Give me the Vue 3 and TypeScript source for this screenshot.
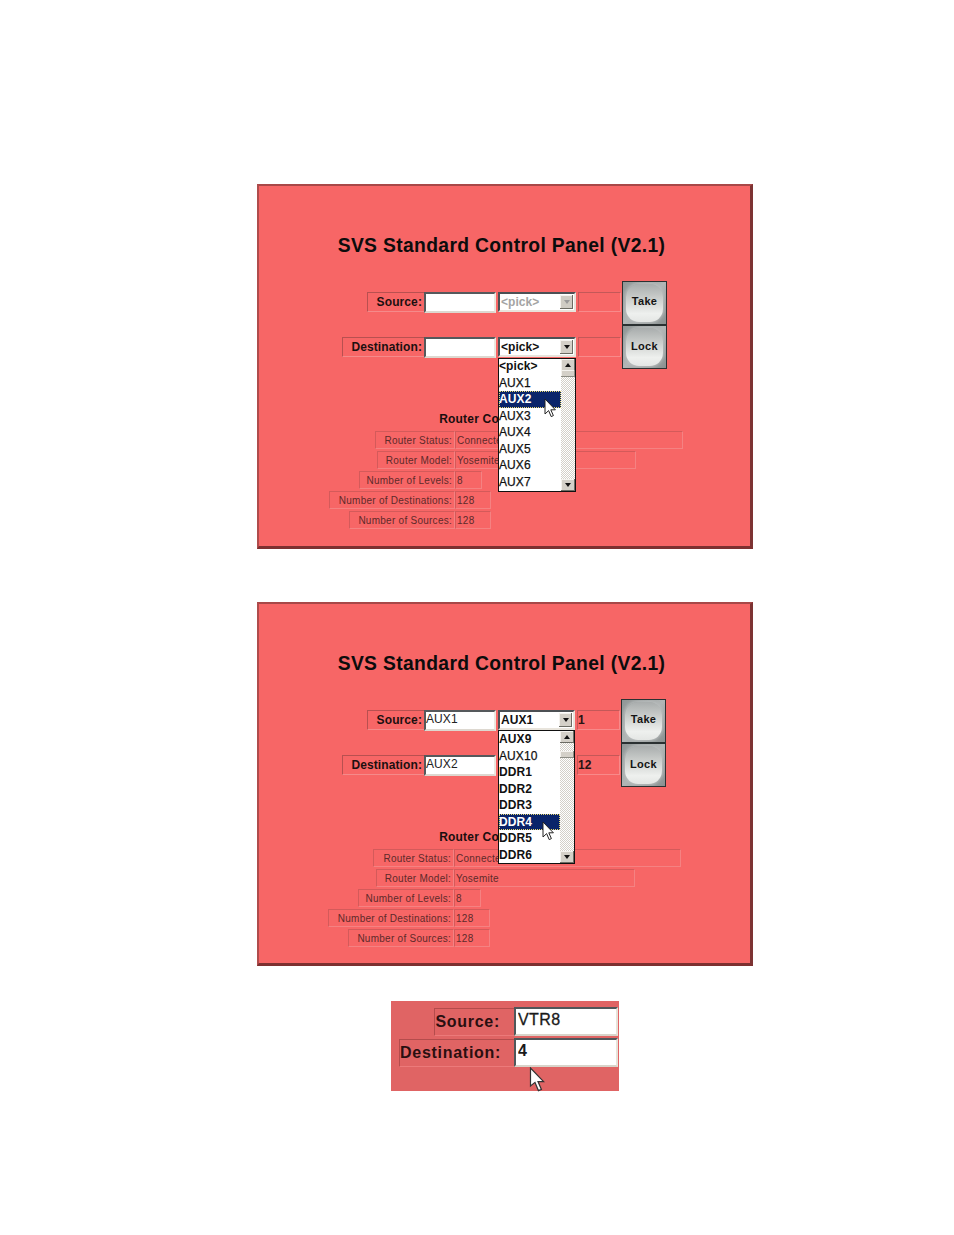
<script setup lang="ts">
interface Info { label: string; value: string; lw: number; vw: number }
interface Item { text: string; selected?: boolean; bold?: boolean }
interface Panel {
  id: string
  cls: string
  src: string
  dst: string
  srcSel: string
  dstSel: string
  srcDisabled: boolean
  srcNum: string
  dstNum: string
  thumb: number
  dropClass: string
  items: Item[]
  infos: Info[]
}

const panels: Panel[] = [
  {
    id: 'a', cls: 'p1', src: '', dst: '', srcSel: '<pick>', dstSel: '<pick>', srcDisabled: true,
    srcNum: '', dstNum: '', thumb: 11, dropClass: 'drop-low',
    items: [
      { text: '<pick>', bold: true }, { text: 'AUX1' }, { text: 'AUX2', selected: true }, { text: 'AUX3' },
      { text: 'AUX4' }, { text: 'AUX5' }, { text: 'AUX6' }, { text: 'AUX7' }
    ],
    infos: [
      { label: 'Router Status:', value: 'Connected', lw: 80, vw: 228 },
      { label: 'Router Model:', value: 'Yosemite', lw: 78, vw: 181 },
      { label: 'Number of Levels:', value: '8', lw: 96, vw: 27 },
      { label: 'Number of Destinations:', value: '128', lw: 126, vw: 36 },
      { label: 'Number of Sources:', value: '128', lw: 106, vw: 36 }
    ]
  },
  {
    id: 'b', cls: 'p2', src: 'AUX1', dst: 'AUX2', srcSel: 'AUX1', dstSel: 'AUX1', srcDisabled: false,
    srcNum: '1', dstNum: '12', thumb: 20, dropClass: 'drop-high',
    items: [
      { text: 'AUX9', bold: true }, { text: 'AUX10' }, { text: 'DDR1', bold: true }, { text: 'DDR2', bold: true },
      { text: 'DDR3', bold: true }, { text: 'DDR4', selected: true }, { text: 'DDR5', bold: true }, { text: 'DDR6', bold: true }
    ],
    infos: [
      { label: 'Router Status:', value: 'Connected', lw: 81, vw: 227 },
      { label: 'Router Model:', value: 'Yosemite', lw: 78, vw: 181 },
      { label: 'Number of Levels:', value: '8', lw: 96, vw: 27 },
      { label: 'Number of Destinations:', value: '128', lw: 126, vw: 36 },
      { label: 'Number of Sources:', value: '128', lw: 106, vw: 36 }
    ]
  }
]
</script>

<template>
  <div class="page">
    <section v-for="p in panels" :key="p.id" class="panel" :class="p.cls">
      <h1 class="title">SVS Standard Control Panel (V2.1)</h1>

      <div class="controls">
        <div class="ctl-row">
          <div class="label-cell"><span class="lbl lbl-src">Source:</span></div>
          <input class="text" readonly :value="p.src" aria-label="Source" />
          <div class="select" :class="{ disabled: p.srcDisabled }">
            <span class="sel-text">{{ p.srcSel }}</span>
            <span class="sel-btn"><i class="tri-down"></i></span>
          </div>
          <div class="num">{{ p.srcNum }}</div>
          <button class="gel" type="button"><span>Take</span></button>
        </div>
        <div class="ctl-row">
          <div class="label-cell"><span class="lbl lbl-dst">Destination:</span></div>
          <input class="text" readonly :value="p.dst" aria-label="Destination" />
          <div class="select">
            <span class="sel-text">{{ p.dstSel }}</span>
            <span class="sel-btn"><i class="tri-down"></i></span>
          </div>
          <div class="num">{{ p.dstNum }}</div>
          <button class="gel" type="button"><span>Lock</span></button>
        </div>
      </div>

      <h2 class="subtitle">Router Configuration</h2>

      <div class="infos">
        <div v-for="r in p.infos" :key="r.label" class="info-row">
          <div class="info-left">
            <span class="info-label" :style="{ width: r.lw + 'px' }">{{ r.label }}</span>
          </div>
          <span class="info-value" :style="{ width: r.vw + 'px' }">{{ r.value }}</span>
        </div>
      </div>

      <div class="drop" :class="p.dropClass">
        <ul class="list">
          <li v-for="it in p.items" :key="it.text" :class="{ sel: it.selected, bold: it.bold }">{{ it.text }}</li>
        </ul>
        <div class="sb">
          <span class="sb-btn"><i class="tri-up"></i></span>
          <span class="sb-thumb" :style="{ top: p.thumb + 'px' }"></span>
          <span class="sb-btn sb-down"><i class="tri-down"></i></span>
        </div>
      </div>

      <svg class="cursor" width="12" height="20" viewBox="0 0 12 20">
        <path d="M1 1V16L4.6 12.6L7.2 18.6L9.4 17.6L6.8 11.8H11.4Z" fill="#fff" stroke="#222" stroke-width="1" />
      </svg>
    </section>

    <section class="crop">
      <div class="crop-row">
        <span class="crop-lbl crop-src">Source:</span>
        <input class="crop-input" readonly value="VTR8" aria-label="Source" />
      </div>
      <div class="crop-row">
        <span class="crop-lbl crop-dst">Destination:</span>
        <input class="crop-input strong" readonly value="4" aria-label="Destination" />
      </div>
      <svg class="crop-cursor" width="16" height="25" viewBox="0 0 16 25">
        <path d="M1.5 1V19L6 15.4L9.4 23.6L12.4 22.4L9 14.6H14.6Z" fill="#fff" stroke="#333" stroke-width="1.2" />
      </svg>
    </section>
  </div>
</template>

<style>
html, body { margin: 0; background: #fff; }
</style>

<style scoped>
.page {
  height: 1235px;
  padding-top: 184px;
  box-sizing: border-box;
  overflow: hidden;
  background: #fff;
  font-family: "Liberation Sans", Arial, sans-serif;
  color: #111;
}
.panel {
  position: relative;
  box-sizing: border-box;
  width: 496px;
  height: 365px;
  margin-left: 257px;
  padding-top: 48px;
  background: #f76666;
  border-top: 2px solid #a84848;
  border-left: 2px solid #b04c4c;
  border-right: 3px solid #7d3333;
  border-bottom: 3px solid #7d3030;
}
.p2 { height: 364px; margin-top: 53px; }

.title {
  margin: 0;
  padding-right: 6px;
  height: 24px;
  font-size: 19.3px;
  line-height: 24px;
  font-weight: 700;
  text-align: center;
  letter-spacing: 0.35px;
  color: #0c0c0c;
}
.controls { margin-top: 23px; }
.ctl-row { box-sizing: border-box; display: flex; align-items: center; height: 44px; }
.ctl-row:first-child { padding-bottom: 2px; }
.label-cell { width: 165px; display: flex; justify-content: flex-end; }
.lbl {
  box-sizing: border-box;
  height: 20px;
  line-height: 19px;
  font-size: 12px;
  font-weight: 700;
  letter-spacing: 0.1px;
  text-align: right;
  padding-right: 2px;
  border: 1px solid;
  border-color: #b85050 #f58a8a #f58a8a #b85050;
  border-right: 0;
  color: #1c1010;
}
.lbl-src { width: 57px; }
.lbl-dst { width: 82px; }
.text {
  box-sizing: border-box;
  width: 72px;
  height: 21px;
  margin: 0;
  padding: 0 0 3px 0;
  background: #fff;
  border: 2px solid;
  border-color: #55595c #ebe8e0 #ddd8d0 #55595c;
  border-radius: 0;
  outline: none;
  font-family: inherit;
  font-size: 12px;
  letter-spacing: 0.1px;
  color: #222;
}
.select {
  box-sizing: border-box;
  display: flex;
  align-items: center;
  justify-content: space-between;
  width: 78px;
  height: 20px;
  margin-left: 2px;
  padding: 0 1px 0 1px;
  background: #fff;
  border: 2px solid;
  border-color: #4c5054 #e8e4dc #e8e4dc #4c5054;
  font-size: 12px;
  font-weight: 700;
  letter-spacing: 0.05px;
}
.p2 .select { width: 77px; }
.select.disabled { color: #a4a4a4; }
.select.disabled .sel-btn { background: #cfccc4; }
.select.disabled .tri-down { border-top-color: #9a9a9a; }
.sel-text { line-height: 16px; }
.sel-btn {
  width: 13px;
  height: 14px;
  display: flex;
  align-items: center;
  justify-content: center;
  background: #d4d0c8;
  box-shadow: inset -1px -1px 0 #6c6c64, inset 1px 1px 0 #f4f2ee;
}
.tri-down, .tri-up {
  display: block;
  width: 0;
  height: 0;
  border-left: 3.5px solid transparent;
  border-right: 3.5px solid transparent;
}
.tri-down { border-top: 4px solid #111; }
.tri-up { border-bottom: 4px solid #111; }
.num {
  box-sizing: border-box;
  width: 43px;
  height: 20px;
  margin-left: 2px;
  padding-left: 0;
  line-height: 19px;
  font-size: 12px;
  font-weight: 700;
  color: #2a1414;
  border: 1px solid;
  border-color: #c45858 #f88a8a #f88a8a #c45858;
}
.gel {
  position: relative;
  align-self: flex-start;
  box-sizing: border-box;
  width: 45px;
  height: 44px;
  margin: 0 0 0 1px;
  padding: 0;
  border: 1px solid #2b3132;
  background: linear-gradient(135deg, #8f9595, #b2b6b6 50%, #8a9090);
  font-family: inherit;
  font-size: 11px;
  font-weight: 700;
  letter-spacing: 0.35px;
  color: #141414;
  overflow: hidden;
}
.gel::before {
  content: "";
  position: absolute;
  inset: 2px 3px;
  border-radius: 13px;
  background: linear-gradient(180deg, #a9adad 0%, #c8cbc9 35%, #eef0ee 78%, #e4e6e4 100%);
  box-shadow: 0 0 3px 1px rgba(190, 194, 194, 0.8);
}
.gel span { position: relative; top: -2px; }
.ctl-row:last-child .gel span { top: -1px; }
.subtitle {
  margin: 42px 0 4px;
  padding-right: 6px;
  height: 16px;
  font-size: 12px;
  line-height: 16px;
  font-weight: 700;
  text-align: center;
  letter-spacing: 0.2px;
  color: #1a0e0e;
}
.info-row { display: flex; height: 18px; margin-bottom: 2px; }
.info-left { width: 196px; display: flex; justify-content: flex-end; }
.p2 .info-left { width: 195px; }
.info-label, .info-value {
  box-sizing: border-box;
  height: 18px;
  line-height: 17px;
  font-size: 10px;
  letter-spacing: 0.26px;
  color: #5e2a2a;
  border: 1px solid;
  border-color: #d45a5a #f58282 #f58282 #d45a5a;
  white-space: nowrap;
  overflow: hidden;
}
.info-label { text-align: right; padding-right: 2px; }
.info-value { padding-left: 1px; }

.drop {
  position: absolute;
  left: 239px;
  box-sizing: border-box;
  display: flex;
  width: 78px;
  height: 134px;
  background: #fff;
  border: 1px solid #111;
}
.drop-low { top: 172px; }
.drop-low .list { margin-top: -1px; }
.drop-high { top: 126px; width: 77px; }
.list {
  flex: 1;
  min-width: 0;
  margin: 0;
  padding: 0;
  list-style: none;
}
.list li {
  box-sizing: border-box;
  height: 16.5px;
  line-height: 16.5px;
  font-size: 12px;
  letter-spacing: 0.1px;
  color: #111;
  -webkit-text-stroke: 0.25px #111;
}
.list li.bold { font-weight: 700; -webkit-text-stroke: 0; }
.list li.sel {
  background: #0a246a;
  color: #fff;
  font-weight: 700;
  -webkit-text-stroke: 0;
  outline: 1px dotted #e8d870;
  outline-offset: -1px;
}
.sb {
  position: relative;
  flex: none;
  width: 14px;
  background: repeating-conic-gradient(#d4d0c8 0 25%, #fff 0 50%) 0 0 / 2px 2px;
}
.sb-btn {
  position: absolute;
  left: 0;
  top: 0;
  width: 14px;
  height: 12px;
  display: flex;
  align-items: center;
  justify-content: center;
  background: #d4d0c8;
  box-shadow: inset -1px -1px 0 #6c6c64, inset 1px 1px 0 #f4f2ee;
}
.sb-down { top: auto; bottom: 0; }
.sb-thumb {
  position: absolute;
  left: 0;
  width: 14px;
  height: 7px;
  background: #d4d0c8;
  box-shadow: inset -1px -1px 0 #8c8c84, inset 1px 1px 0 #f4f2ee;
}
.cursor { position: absolute; left: 285px; top: 212px; }
.p2 .cursor { left: 283px; top: 217px; }

.crop {
  position: relative;
  box-sizing: border-box;
  width: 228px;
  height: 90px;
  margin: 35px 0 0 391px;
  padding-top: 6px;
  background: #e06464;
}
.crop-row {
  display: flex;
  justify-content: flex-end;
  height: 29px;
  margin-bottom: 2px;
  padding-right: 1px;
}
.crop-lbl {
  box-sizing: border-box;
  height: 28px;
  margin-top: 1px;
  padding-right: 14px;
  line-height: 25px;
  text-align: right;
  font-size: 16px;
  font-weight: 700;
  letter-spacing: 0.72px;
  color: #2a0f10;
  border: 1px solid;
  border-color: #b44c4c #ec7a7a #ec7a7a #b44c4c;
  border-right: 0;
}
.crop-src { width: 80px; }
.crop-dst { width: 115px; }
.crop-input {
  box-sizing: border-box;
  width: 104px;
  height: 29px;
  margin: 0;
  padding: 0 0 3px 2px;
  background: #fff;
  border: 2px solid;
  border-color: #50575a #e6e3da #d8d4ca #50575a;
  border-radius: 0;
  outline: none;
  font-family: inherit;
  font-size: 16px;
  letter-spacing: 0.4px;
  color: #1a1a1a;
  -webkit-text-stroke: 0.3px #1a1a1a;
}
.crop-input.strong { font-weight: 700; -webkit-text-stroke: 0; }
.crop-cursor { position: absolute; left: 138px; top: 66px; }
</style>
